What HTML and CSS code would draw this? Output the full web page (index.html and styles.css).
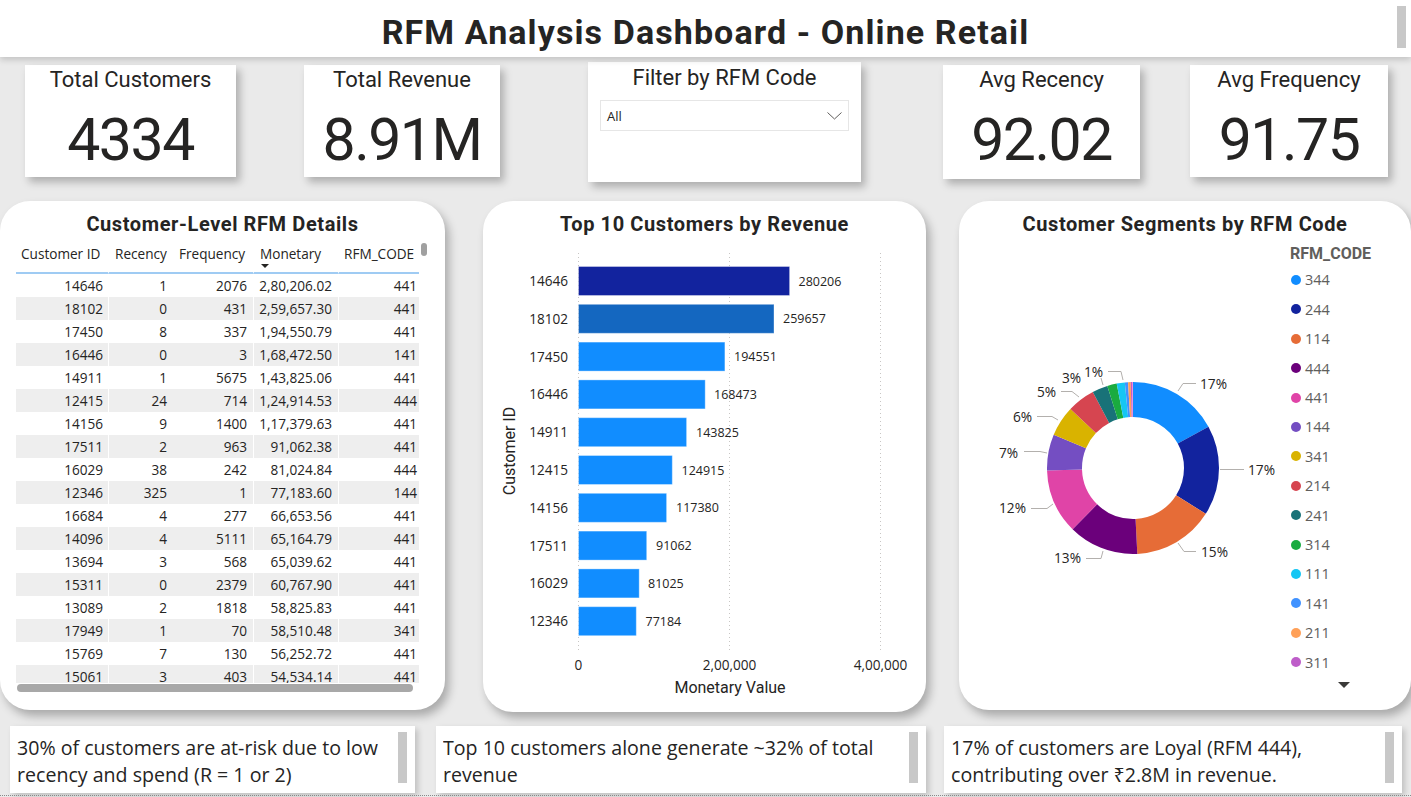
FILE: index.html
```html
<!DOCTYPE html>
<html lang="en">
<head>
<meta charset="utf-8">
<title>RFM Analysis Dashboard - Online Retail</title>
<link rel="stylesheet" href="styles.css">
</head>
<body>
<div class="page">
  <header class="topbar">
    <h1 class="title">RFM Analysis Dashboard - Online Retail</h1>
    <div class="topbar-scroll"></div>
  </header>

  <section class="kpis">
    <div class="card kpi kpi-1"><div class="kpi-label">Total Customers</div><div class="kpi-value">4334</div></div>
    <div class="card kpi kpi-2"><div class="kpi-label">Total Revenue</div><div class="kpi-value">8.91M</div></div>
    <div class="card filter">
      <div class="kpi-label">Filter by RFM Code</div>
      <div class="dropdown">
        <span>All</span>
        <svg class="chev" width="15" height="8" viewBox="0 0 15 8"><polyline points="0.5,0.5 7.5,7 14.5,0.5" fill="none" stroke="#605e5c" stroke-width="1"/></svg>
      </div>
    </div>
    <div class="card kpi kpi-4"><div class="kpi-label">Avg Recency</div><div class="kpi-value">92.02</div></div>
    <div class="card kpi kpi-5"><div class="kpi-label">Avg Frequency</div><div class="kpi-value">91.75</div></div>
  </section>

  <section class="panels">
    <div class="panel panel-table">
      <div class="panel-title">Customer-Level RFM Details</div>
      <div class="tbl-area">
        <div class="tbl-clip">
          <div class="trow thead">
            <div class="th c1">Customer ID</div>
            <div class="th c2">Recency</div>
            <div class="th c3">Frequency</div>
            <div class="th c4">Monetary<span class="sort"></span></div>
            <div class="th c5">RFM_CODE</div>
          </div>
          <div class="trow"><div class="td c1">14646</div><div class="td c2">1</div><div class="td c3">2076</div><div class="td c4">2,80,206.02</div><div class="td c5">441</div></div>
          <div class="trow"><div class="td c1">18102</div><div class="td c2">0</div><div class="td c3">431</div><div class="td c4">2,59,657.30</div><div class="td c5">441</div></div>
          <div class="trow"><div class="td c1">17450</div><div class="td c2">8</div><div class="td c3">337</div><div class="td c4">1,94,550.79</div><div class="td c5">441</div></div>
          <div class="trow"><div class="td c1">16446</div><div class="td c2">0</div><div class="td c3">3</div><div class="td c4">1,68,472.50</div><div class="td c5">141</div></div>
          <div class="trow"><div class="td c1">14911</div><div class="td c2">1</div><div class="td c3">5675</div><div class="td c4">1,43,825.06</div><div class="td c5">441</div></div>
          <div class="trow"><div class="td c1">12415</div><div class="td c2">24</div><div class="td c3">714</div><div class="td c4">1,24,914.53</div><div class="td c5">444</div></div>
          <div class="trow"><div class="td c1">14156</div><div class="td c2">9</div><div class="td c3">1400</div><div class="td c4">1,17,379.63</div><div class="td c5">441</div></div>
          <div class="trow"><div class="td c1">17511</div><div class="td c2">2</div><div class="td c3">963</div><div class="td c4">91,062.38</div><div class="td c5">441</div></div>
          <div class="trow"><div class="td c1">16029</div><div class="td c2">38</div><div class="td c3">242</div><div class="td c4">81,024.84</div><div class="td c5">444</div></div>
          <div class="trow"><div class="td c1">12346</div><div class="td c2">325</div><div class="td c3">1</div><div class="td c4">77,183.60</div><div class="td c5">144</div></div>
          <div class="trow"><div class="td c1">16684</div><div class="td c2">4</div><div class="td c3">277</div><div class="td c4">66,653.56</div><div class="td c5">441</div></div>
          <div class="trow"><div class="td c1">14096</div><div class="td c2">4</div><div class="td c3">5111</div><div class="td c4">65,164.79</div><div class="td c5">441</div></div>
          <div class="trow"><div class="td c1">13694</div><div class="td c2">3</div><div class="td c3">568</div><div class="td c4">65,039.62</div><div class="td c5">441</div></div>
          <div class="trow"><div class="td c1">15311</div><div class="td c2">0</div><div class="td c3">2379</div><div class="td c4">60,767.90</div><div class="td c5">441</div></div>
          <div class="trow"><div class="td c1">13089</div><div class="td c2">2</div><div class="td c3">1818</div><div class="td c4">58,825.83</div><div class="td c5">441</div></div>
          <div class="trow"><div class="td c1">17949</div><div class="td c2">1</div><div class="td c3">70</div><div class="td c4">58,510.48</div><div class="td c5">341</div></div>
          <div class="trow"><div class="td c1">15769</div><div class="td c2">7</div><div class="td c3">130</div><div class="td c4">56,252.72</div><div class="td c5">441</div></div>
          <div class="trow"><div class="td c1">15061</div><div class="td c2">3</div><div class="td c3">403</div><div class="td c4">54,534.14</div><div class="td c5">441</div></div>
        </div>
        <div class="hscroll"></div>
        <div class="vscroll"></div>
      </div>
    </div>

    <div class="panel panel-bar">
      <div class="panel-title">Top 10 Customers by Revenue</div>
      <svg class="chart" width="443" height="465" viewBox="483 240 443 465">
        <g stroke="#c8c6c4" stroke-width="1" stroke-dasharray="1 3">
          <line x1="578.5" y1="253" x2="578.5" y2="652"/>
          <line x1="729.5" y1="253" x2="729.5" y2="652"/>
          <line x1="880.5" y1="253" x2="880.5" y2="652"/>
        </g>
        <g stroke="rgba(255,255,255,0.35)" stroke-width="1">
          <rect x="578.5" y="266.5" width="211.1" height="29" fill="#12239e"/>
          <rect x="578.5" y="304.3" width="195.5" height="29" fill="#1467c0"/>
          <rect x="578.5" y="342.1" width="146.4" height="29" fill="#118dff"/>
          <rect x="578.5" y="379.9" width="126.7" height="29" fill="#118dff"/>
          <rect x="578.5" y="417.7" width="108.1" height="29" fill="#118dff"/>
          <rect x="578.5" y="455.5" width="93.8" height="29" fill="#118dff"/>
          <rect x="578.5" y="493.3" width="88.1" height="29" fill="#118dff"/>
          <rect x="578.5" y="531.1" width="68.2" height="29" fill="#118dff"/>
          <rect x="578.5" y="568.9" width="60.7" height="29" fill="#118dff"/>
          <rect x="578.5" y="606.7" width="57.8" height="29" fill="#118dff"/>
        </g>
        <g class="val" font-size="12.5" fill="#252423">
          <text x="798.5" y="285.5">280206</text>
          <text x="783" y="323.3">259657</text>
          <text x="734" y="361.1">194551</text>
          <text x="714" y="398.9">168473</text>
          <text x="696" y="436.7">143825</text>
          <text x="681.5" y="474.5">124915</text>
          <text x="676" y="512.3">117380</text>
          <text x="656" y="550.1">91062</text>
          <text x="648" y="587.9">81025</text>
          <text x="645.5" y="625.7">77184</text>
        </g>
        <g class="ylab" font-size="13.6" fill="#252423" text-anchor="end">
          <text x="568" y="286">14646</text>
          <text x="568" y="323.8">18102</text>
          <text x="568" y="361.6">17450</text>
          <text x="568" y="399.4">16446</text>
          <text x="568" y="437.2">14911</text>
          <text x="568" y="475">12415</text>
          <text x="568" y="512.8">14156</text>
          <text x="568" y="550.6">17511</text>
          <text x="568" y="588.4">16029</text>
          <text x="568" y="626.2">12346</text>
        </g>
        <text class="axis-title" x="515" y="451" text-anchor="middle" transform="rotate(-90 515 451)">Customer ID</text>
        <g class="xlab" font-size="13.6" fill="#252423" text-anchor="middle">
          <text x="578.5" y="670">0</text>
          <text x="729.5" y="670">2,00,000</text>
          <text x="880.5" y="670">4,00,000</text>
        </g>
        <text class="axis-title" x="730" y="692.5" text-anchor="middle">Monetary Value</text>
      </svg>
    </div>

    <div class="panel panel-donut">
      <div class="panel-title">Customer Segments by RFM Code</div>
      <div class="donut-body">
        <svg class="chart" width="326" height="460" viewBox="959 240 326 460">
          <g transform="rotate(-90 1133 468)" fill="none" stroke-width="35">
            <circle cx="1133" cy="468" r="68.5" stroke="#118dff" stroke-dasharray="73.17 430.4" stroke-dashoffset="0"/>
            <circle cx="1133" cy="468" r="68.5" stroke="#12239e" stroke-dasharray="72.74 430.4" stroke-dashoffset="-73.17"/>
            <circle cx="1133" cy="468" r="68.5" stroke="#e66c37" stroke-dasharray="65.42 430.4" stroke-dashoffset="-145.91"/>
            <circle cx="1133" cy="468" r="68.5" stroke="#6b007b" stroke-dasharray="56.81 430.4" stroke-dashoffset="-211.33"/>
            <circle cx="1133" cy="468" r="68.5" stroke="#e044a7" stroke-dasharray="52.08 430.4" stroke-dashoffset="-268.14"/>
            <circle cx="1133" cy="468" r="68.5" stroke="#744ec2" stroke-dasharray="29.27 430.4" stroke-dashoffset="-320.22"/>
            <circle cx="1133" cy="468" r="68.5" stroke="#d9b300" stroke-dasharray="24.53 430.4" stroke-dashoffset="-349.49"/>
            <circle cx="1133" cy="468" r="68.5" stroke="#d64550" stroke-dasharray="22.38 430.4" stroke-dashoffset="-374.02"/>
            <circle cx="1133" cy="468" r="68.5" stroke="#197278" stroke-dasharray="12.48 430.4" stroke-dashoffset="-396.4"/>
            <circle cx="1133" cy="468" r="68.5" stroke="#1aab40" stroke-dasharray="7.75 430.4" stroke-dashoffset="-408.88"/>
            <circle cx="1133" cy="468" r="68.5" stroke="#15c6f4" stroke-dasharray="6.46 430.4" stroke-dashoffset="-416.63"/>
            <circle cx="1133" cy="468" r="68.5" stroke="#4092ff" stroke-dasharray="2.58 430.4" stroke-dashoffset="-423.09"/>
            <circle cx="1133" cy="468" r="68.5" stroke="#ffa058" stroke-dasharray="2.15 430.4" stroke-dashoffset="-425.67"/>
            <circle cx="1133" cy="468" r="68.5" stroke="#be5dc9" stroke-dasharray="1.29 430.4" stroke-dashoffset="-427.82"/>
            <circle cx="1133" cy="468" r="68.5" stroke="#f472d0" stroke-dasharray="1.29 430.4" stroke-dashoffset="-429.11"/>
          </g>
          <g fill="none" stroke="#b3b0ad" stroke-width="1">
            <polyline points="1178,391 1183,383.5 1196,383.5"/>
            <polyline points="1220,469.5 1244,469.5"/>
            <polyline points="1178,543 1184,551.5 1196,551.5"/>
            <polyline points="1103,551 1101,558.5 1086,558.5"/>
            <polyline points="1053,504 1047,508.5 1031,508.5"/>
            <polyline points="1047,453 1040,451.5 1024,451.5"/>
            <polyline points="1058,420 1052,416.5 1037,416.5"/>
            <polyline points="1079,397 1072,391.5 1061,391.5"/>
            <polyline points="1103,385 1101,378"/>
            <polyline points="1108,371.5 1121,371.5 1123,380"/>
          </g>
          <g class="dlab" font-size="13.7" fill="#252423">
            <text x="1200" y="389">17%</text>
            <text x="1248" y="475">17%</text>
            <text x="1201" y="556.5">15%</text>
            <text x="1054" y="563">13%</text>
            <text x="999" y="513">12%</text>
            <text x="999" y="457.5">7%</text>
            <text x="1013" y="421.5">6%</text>
            <text x="1037" y="396.5">5%</text>
            <text x="1062" y="383">3%</text>
            <text x="1084" y="377">1%</text>
          </g>
        </svg>
        <div class="legend">
          <div class="legend-title">RFM_CODE</div>
          <ul class="legend-list">
            <li><span class="dot" style="background:#118dff"></span>344</li>
            <li><span class="dot" style="background:#12239e"></span>244</li>
            <li><span class="dot" style="background:#e66c37"></span>114</li>
            <li><span class="dot" style="background:#6b007b"></span>444</li>
            <li><span class="dot" style="background:#e044a7"></span>441</li>
            <li><span class="dot" style="background:#744ec2"></span>144</li>
            <li><span class="dot" style="background:#d9b300"></span>341</li>
            <li><span class="dot" style="background:#d64550"></span>214</li>
            <li><span class="dot" style="background:#197278"></span>241</li>
            <li><span class="dot" style="background:#1aab40"></span>314</li>
            <li><span class="dot" style="background:#15c6f4"></span>111</li>
            <li><span class="dot" style="background:#4092ff"></span>141</li>
            <li><span class="dot" style="background:#ffa058"></span>211</li>
            <li><span class="dot" style="background:#be5dc9"></span>311</li>
          </ul>
          <div class="legend-more"></div>
        </div>
      </div>
    </div>
  </section>

  <section class="notes">
    <div class="note note-1"><p class="note-text">30% of customers are at-risk due to low<br>recency and spend (R = 1 or 2)</p><div class="note-scroll"></div></div>
    <div class="note note-2"><p class="note-text">Top 10 customers alone generate ~32% of total<br>revenue</p><div class="note-scroll"></div></div>
    <div class="note note-3"><p class="note-text">17% of customers are Loyal (RFM 444),<br>contributing over ₹2.8M in revenue.</p><div class="note-scroll"></div></div>
  </section>
  <div class="baseline"></div>
</div>
</body>
</html>
```

FILE: styles.css
```css
* { box-sizing: border-box; margin: 0; padding: 0; }
html, body { width: 1411px; height: 797px; overflow: hidden; }
body {
  background: #eaeaea;
  font-family: "Open Sans", "Noto Sans", sans-serif;
  color: #252423;
}
.page { width: 1411px; height: 797px; display: flex; flex-direction: column; }

/* title bar */
.topbar {
  flex: none;
  height: 57px;
  background: #fff;
  box-shadow: 0 3px 6px rgba(0, 0, 0, 0.16);
  display: grid;
  grid-template-columns: 1fr auto 1fr;
  align-items: start;
  position: relative;
  z-index: 2;
}
.title {
  grid-column: 2;
  margin-top: 11px;
  font: 700 34px/42px Roboto, "DejaVu Sans", sans-serif;
  letter-spacing: 1.1px;
  color: #252423;
}
.topbar-scroll {
  grid-column: 3;
  justify-self: end;
  margin: 6px 5px 0 0;
  width: 9px;
  height: 42px;
  background: #c8c8c8;
}

/* KPI row */
.kpis { flex: none; height: 144px; display: flex; align-items: flex-start; padding-top: 5px; }
.card { background: #fff; box-shadow: 4px 5px 8px rgba(0, 0, 0, 0.26); }
.kpi {
  margin-top: 3px;
  height: 112px;
  display: flex;
  flex-direction: column;
  align-items: center;
  padding-top: 3px;
}
.kpi-label { font: 400 22px/24px Roboto, "DejaVu Sans", sans-serif; color: #252423; }
.kpi-value { margin-top: 18px; font: 400 59px/60px Roboto, "DejaVu Sans", sans-serif; letter-spacing: -1.5px; color: #252423; }
.kpi-1 { margin-left: 25px; width: 211px; }
.kpi-2 { margin-left: 68px; width: 196px; }
.filter {
  margin-left: 88px;
  width: 273px;
  height: 120px;
  display: flex;
  flex-direction: column;
  align-items: center;
  padding-top: 4px;
}
.dropdown {
  align-self: flex-start;
  margin: 10px 0 0 12px;
  width: 249px;
  height: 31px;
  border: 1px solid #e6e6e6;
  display: flex;
  align-items: center;
  justify-content: space-between;
  padding: 0 6px 0 6px;
  font-size: 13px;
  color: #252423;
}
.chev { display: block; }
.kpi-4 { margin-left: 82px; width: 197px; height: 114px; }
.kpi-5 { margin-left: 50px; width: 198px; }

/* panels */
.panels { flex: none; height: 525px; display: flex; align-items: flex-start; }
.panel {
  background: #fff;
  border-radius: 30px;
  box-shadow: 4px 6px 10px rgba(0, 0, 0, 0.28);
  overflow: hidden;
}
.panel-title {
  height: 39px;
  padding-top: 11px;
  text-align: center;
  font: 700 20px/24px Roboto, "DejaVu Sans", sans-serif;
  letter-spacing: 0.6px;
  color: #252423;
}
.panel-table { width: 445px; height: 509px; }
.panel-bar { margin-left: 38px; width: 443px; height: 511px; }
.panel-donut { margin-left: 33px; width: 452px; height: 509px; }
.chart { display: block; font-family: "Open Sans", "Noto Sans", sans-serif; }
.axis-title { font: 400 16px Roboto, "DejaVu Sans", sans-serif; fill: #252423; }

/* table */
.tbl-area { position: relative; margin: 3px 0 0 16px; width: 403px; }
.tbl-clip { height: 440px; overflow: hidden; font-size: 13.6px; }
.trow {
  display: grid;
  grid-template-columns: 92px 64px 81px 85px 81px;
  height: 23px;
  line-height: 23px;
}
.trow:nth-child(odd) { background: #eeeeee; }
.thead { height: 31px; line-height: 20px; background: #fff !important; }
.th {
  padding-top: 1px;
  border-bottom: 2px solid #9fcbf3;
  white-space: nowrap;
}
.th.c1 { padding-left: 5px; }
.th.c2 { padding-left: 6px; }
.th.c3 { padding-left: 7px; }
.th.c4 { padding-left: 6px; }
.th.c5 { padding-left: 5px; }
.sort {
  display: block;
  width: 0;
  height: 0;
  margin-left: 1px;
  border-left: 4px solid transparent;
  border-right: 4px solid transparent;
  border-top: 4px solid #252423;
}
.td { text-align: right; white-space: nowrap; }
.td.c1, .td.c2 { padding-right: 5px; }
.td.c3, .td.c4 { padding-right: 6px; }
.td.c5 { padding-right: 2px; }
.c2, .c4, .c5 { border-left: 1px solid #fff; }
.hscroll {
  margin: 1px 0 0 1px;
  width: 396px;
  height: 8px;
  border-radius: 4px;
  background: #a8a8a8;
}
.vscroll {
  position: absolute;
  left: 405px;
  top: 0;
  width: 6px;
  height: 13px;
  border-radius: 3px;
  background: #a0a0a0;
}

/* donut legend */
.donut-body { display: flex; }
.legend { padding: 4px 0 0 5px; }
.legend-title { font: 700 16px/20px Roboto, "DejaVu Sans", sans-serif; color: #605e5c; }
.legend-list { list-style: none; margin-top: 1.3px; }
.legend-list li {
  height: 29.4px;
  display: flex;
  align-items: center;
  font-size: 14.5px;
  color: #605e5c;
}
.dot { width: 10px; height: 10px; border-radius: 50%; margin: 0 4px 0 1px; flex: none; }
.legend-more {
  margin: 5px 0 0 48px;
  width: 0;
  height: 0;
  border-left: 6px solid transparent;
  border-right: 6px solid transparent;
  border-top: 6px solid #3b3a39;
}

/* notes */
.notes { flex: none; height: 67px; display: flex; }
.note {
  height: 67px;
  background: #fff;
  box-shadow: 3px 3px 6px rgba(0, 0, 0, 0.18);
  display: flex;
  padding: 6px 8px 0 7px;
}
.note-1 { margin-left: 10px; width: 405px; }
.note-2 { margin-left: 21px; width: 490px; }
.note-3 { margin-left: 18px; width: 458px; }
.note-text {
  flex: 1;
  height: 55px;
  overflow: hidden;
  padding-top: 2px;
  font-size: 19.6px;
  line-height: 27px;
  color: #252423;
  white-space: nowrap;
}
.note-scroll { flex: none; width: 9px; height: 51px; background: #c8c8c8; }
.baseline { margin-top: 2px; border-top: 1px dotted #8a8a8a; }
```
